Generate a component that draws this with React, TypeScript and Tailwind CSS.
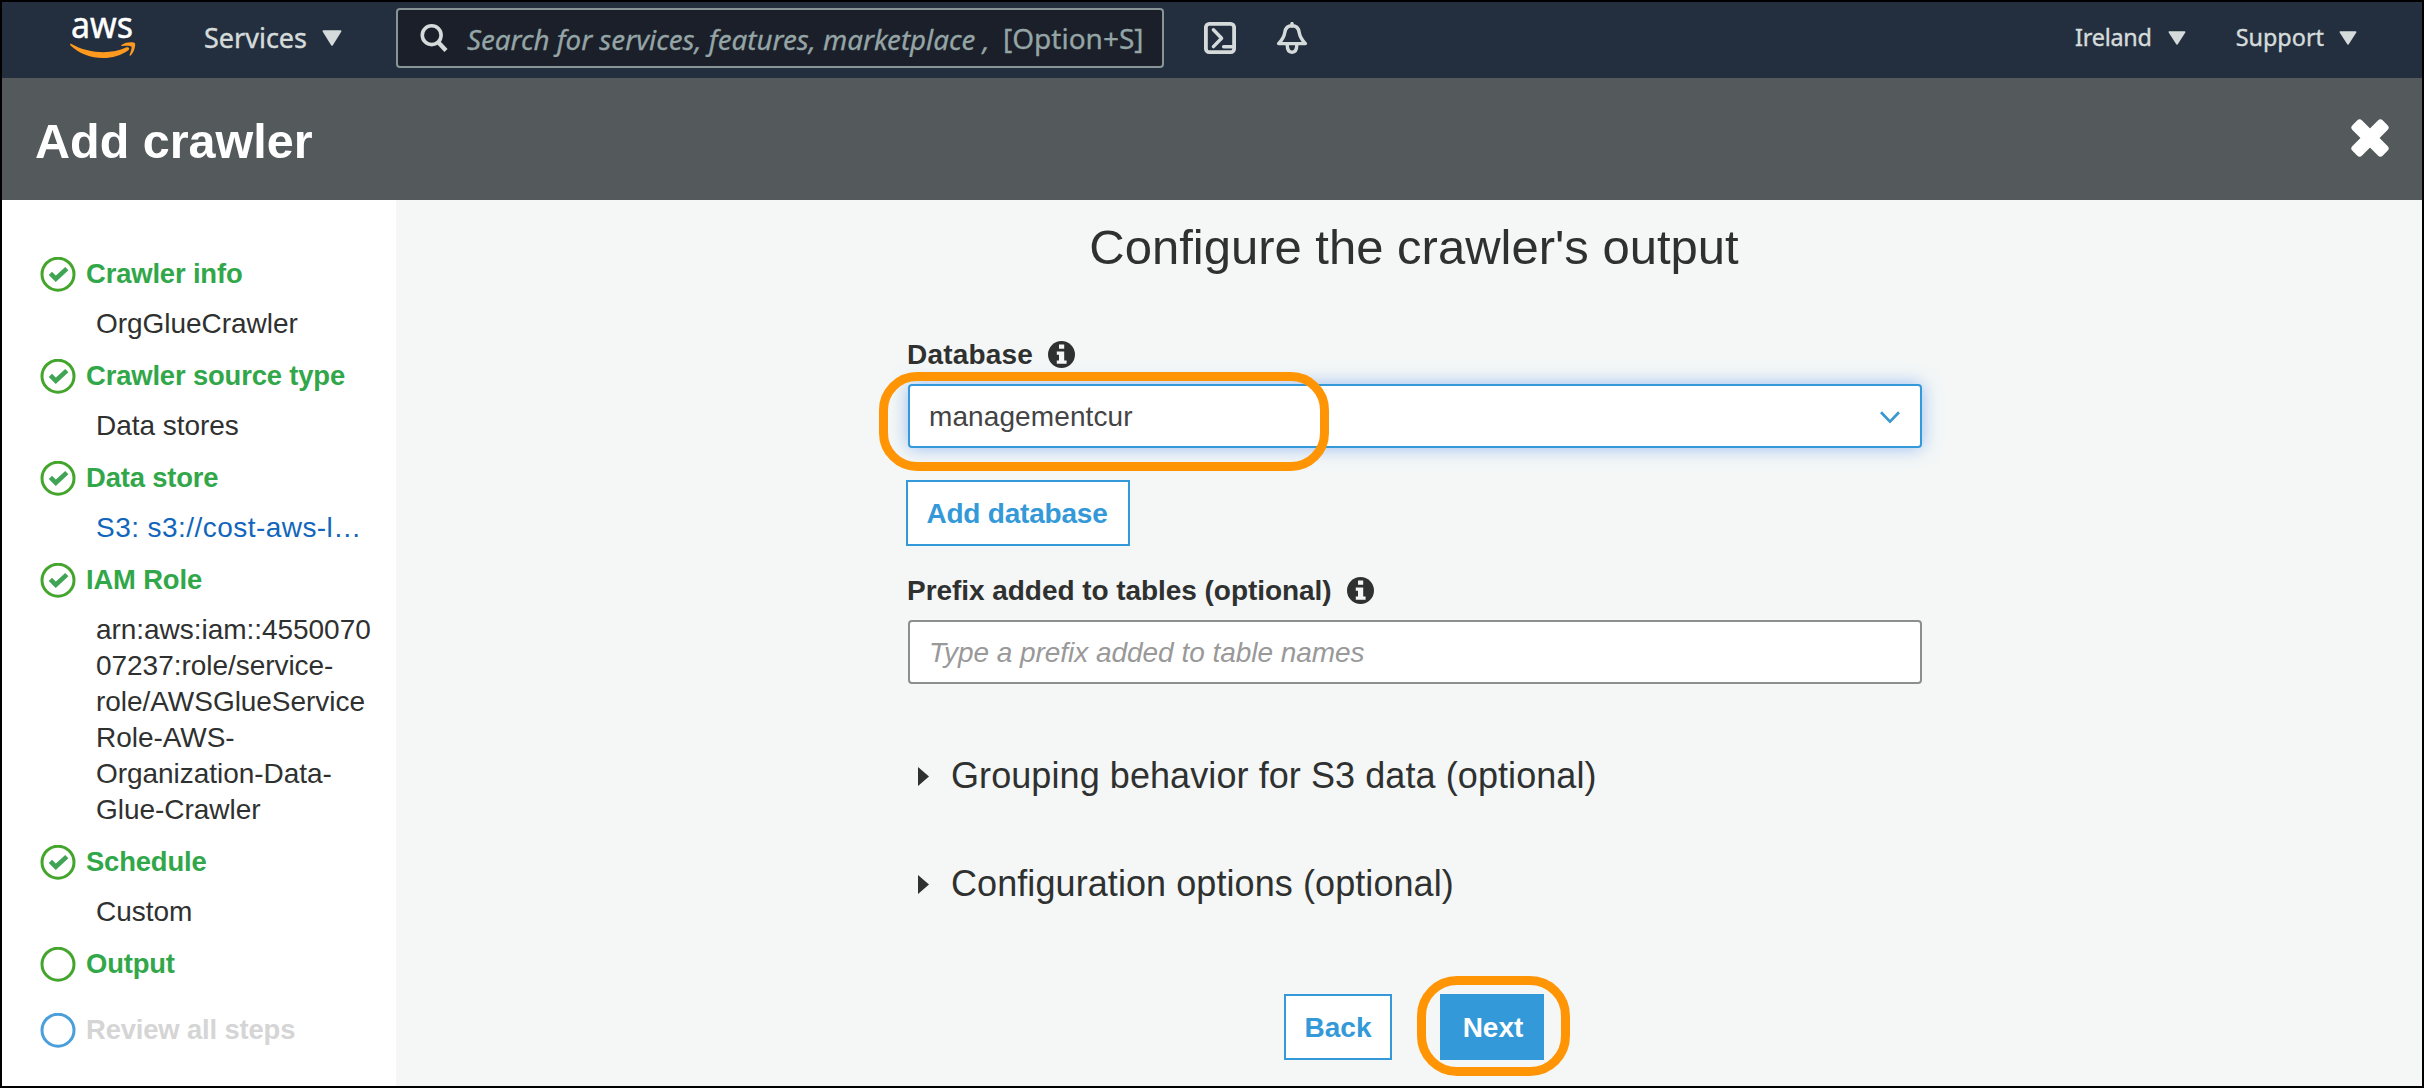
import React from "react";

type Step = {
  title: string;
  detail?: string[];
  state: "done" | "current" | "pending";
  link?: boolean;
};

const steps: Step[] = [
  { title: "Crawler info", detail: ["OrgGlueCrawler"], state: "done" },
  { title: "Crawler source type", detail: ["Data stores"], state: "done" },
  { title: "Data store", detail: ["S3: s3://cost-aws-l…"], state: "done", link: true },
  {
    title: "IAM Role",
    detail: [
      "arn:aws:iam::4550070",
      "07237:role/service-",
      "role/AWSGlueService",
      "Role-AWS-",
      "Organization-Data-",
      "Glue-Crawler",
    ],
    state: "done",
  },
  { title: "Schedule", detail: ["Custom"], state: "done" },
  { title: "Output", state: "current" },
  { title: "Review all steps", state: "pending" },
];

function Caret({ className }: { className: string }) {
  return (
    <svg viewBox="0 0 20 16" preserveAspectRatio="none" className={className}>
      <path d="M1.6 1.2H18.4L10 14.6Z" fill="#d5dbdb" stroke="#d5dbdb" strokeWidth="2" strokeLinejoin="round" />
    </svg>
  );
}

function AwsLogo() {
  return (
    <svg viewBox="0 -13 68 57" className="h-[57px] w-[68px] overflow-visible">
      <text
        x="2"
        y="23"
        fontSize="37"
        textLength="62"
        lengthAdjust="spacingAndGlyphs"
        fill="#fff"
        stroke="#fff"
        strokeWidth="0.5"
        fontFamily="Noto Sans, sans-serif"
      >
        aws
      </text>
      <path d="M1.5 28.5C20 39 42 39.6 57 32.6C59.4 31.6 61.4 33.6 59.4 35.2C44 46.6 17 46 1 30Z" fill="#ff9a1e" />
      <path
        d="M52.5 30C57 26.8 65 26.8 66 28.4C66.8 30.3 65 37.5 61.6 40.4C60.8 41 60.2 40.6 60.6 39.8C62 36.6 63 32.6 62.4 31.6C61.6 30.5 57 30.6 53.2 31.1C52.2 31.2 51.8 30.6 52.5 30Z"
        fill="#ff9a1e"
      />
    </svg>
  );
}

function StepIcon({ state }: { state: Step["state"] }) {
  return (
    <svg viewBox="0 0 36 36" className="mt-0.5 size-9 shrink-0" fill="none">
      <circle cx="18" cy="17.2" r="16" stroke={state === "pending" ? "#4a9fdb" : "#43a52c"} strokeWidth="3" />
      {state === "done" && <path d="M10.4 16.4L15.8 21.8L26.8 11.6" stroke="#40a455" strokeWidth="4.6" />}
    </svg>
  );
}

function InfoIcon() {
  return (
    <svg viewBox="0 0 27 27" className="size-[27px]">
      <circle cx="13.5" cy="13.5" r="13.5" fill="#2f3130" />
      <path d="M11 3.4H16.2V7.8H11ZM8.8 10.6H16.2V19.6H18.6V22.8H8.8V19.6H11V13.8H8.8Z" fill="#f4f7f6" />
    </svg>
  );
}

function Expander({ label }: { label: string }) {
  return (
    <div className="flex h-10 items-center pl-[10px]">
      <svg viewBox="0 0 11 19" className="mr-[22px] h-[19px] w-[11px]">
        <path d="M0 0L11 9.5L0 19Z" fill="#2f3130" />
      </svg>
      <span className="text-[36px] leading-10 tracking-[0.08px]">{label}</span>
    </div>
  );
}

export default function App() {
  return (
    <div className="flex h-[1088px] w-[2424px] flex-col overflow-hidden border-2 border-black bg-[#f4f7f6] font-['Liberation_Sans',Arial,sans-serif] whitespace-nowrap text-[#2f3130]">
      <nav className="flex h-[76px] shrink-0 items-start bg-[#232f3e] font-['Noto_Sans',sans-serif] text-[#d5dbdb]">
        <div className="ml-[67px]">
          <AwsLogo />
        </div>
        <div className="mt-[18px] ml-[67px] flex h-9 w-[192px] items-center">
          <span className="text-[27px] leading-9 [-webkit-text-stroke:0.4px]">Services</span>
          <Caret className="ml-[15px] h-4 w-5" />
        </div>
        <div className="mt-1.5 flex h-[60px] w-[768px] items-center rounded-[4px] border-2 border-[#879596] bg-[#1a1f29]">
          <svg viewBox="0 0 28 28" className="ml-[22px] size-7 shrink-0" fill="none" stroke="#d5dbdb" strokeWidth="3.6">
            <circle cx="11.7" cy="11.2" r="9.4" />
            <path d="M18 18L26 26.4" strokeWidth="4.4" />
          </svg>
          <span className="mt-0.5 ml-[19px] w-[521px] shrink-0 overflow-hidden text-[27.7px] leading-9 text-[#95a5a6] italic [-webkit-text-stroke:0.3px]">
            Search for services, features, marketplace ,
          </span>
          <span className="ml-[15px] text-[28px] leading-9 text-[#95a5a6] [-webkit-text-stroke:0.3px]">[Option+S]</span>
        </div>
        <svg viewBox="0 0 32 32" className="mt-5 ml-10 size-8 shrink-0" fill="none" stroke="#d5dbdb" strokeWidth="3.8">
          <rect x="1.9" y="1.9" width="28.2" height="28.2" rx="3.4" />
          <path d="M9.4 7.8L17.6 16.2L9.4 24.6" strokeLinecap="round" strokeLinejoin="round" strokeWidth="3.4" />
          <path d="M19.6 24.8H28" strokeLinecap="round" strokeWidth="3.4" />
        </svg>
        <svg viewBox="0 0 32 32" className="mt-5 ml-10 size-8 shrink-0" fill="none" stroke="#d5dbdb" strokeWidth="3.4" strokeLinejoin="round">
          <path d="M2.6 21.6C6.5 17.5 8.2 14.5 8.8 10.5C9.4 6 12 3.8 16 3.8C20 3.8 22.6 6 23.2 10.5C23.8 14.5 25.5 17.5 29.4 21.6Z" />
          <path d="M16 4V1.6" strokeLinecap="round" />
          <path d="M11.2 22.5C11.2 27.5 12.7 30.2 16 30.2C19.3 30.2 20.8 27.5 20.8 22.5" />
        </svg>
        <div className="mt-[18px] mr-[65px] ml-auto flex h-9 items-center text-[23.4px] leading-9 [-webkit-text-stroke:0.4px]">
          <span className="-mt-0.5 tracking-[-0.25px]">Ireland</span>
          <Caret className="ml-4 h-[14px] w-[18px]" />
          <span className="-mt-0.5 ml-[50px]">Support</span>
          <Caret className="ml-[15px] h-[14px] w-[18px]" />
        </div>
      </nav>

      <header className="flex h-[122px] shrink-0 items-center justify-between bg-[#54595c] pr-[33px] pl-[33px] text-white">
        <h1 className="mt-1 text-[48.5px] leading-[60px] font-bold">Add crawler</h1>
        <svg viewBox="0 0 38 38" className="mb-0.5 size-[38px]" fill="#fff">
          <rect x="-2.5" y="12.2" width="43" height="13.6" rx="3.5" transform="rotate(45 19 19)" />
          <rect x="-2.5" y="12.2" width="43" height="13.6" rx="3.5" transform="rotate(-45 19 19)" />
        </svg>
      </header>

      <div className="flex min-h-0 flex-1">
        <aside className="w-[394px] shrink-0 bg-white pt-14 pl-[38px] text-[28px] leading-9">
          {steps.map((step) => (
            <section key={step.title} className={step.detail ? "mb-4" : "mb-[30px]"}>
              <div className="flex h-9 items-center gap-[10px]">
                <StepIcon state={step.state} />
                <h2
                  className={
                    step.state === "pending"
                      ? "text-[27.4px] font-bold tracking-[-0.15px] text-[#d5d5d5]"
                      : "text-[27.4px] font-bold tracking-[-0.15px] text-[#31a749]"
                  }
                >
                  {step.title}
                </h2>
              </div>
              {step.detail && (
                <div className={step.link ? "mt-3.5 pl-14 tracking-[0.45px] text-[#1166bb]" : "mt-3.5 pl-14 tracking-[-0.04px]"}>
                  {step.detail.map((line) => (
                    <p key={line}>{line}</p>
                  ))}
                </div>
              )}
            </section>
          ))}
        </aside>

        <main className="ml-[512px] flex w-[1014px] flex-col pt-[17px]">
          <h2 className="-ml-0.5 text-center text-[49px] leading-[60px]">Configure the crawler's output</h2>

          <div className="mt-[59px] -ml-px flex h-9 items-center gap-[15px]">
            <span className="mt-px text-[28px] leading-9 font-bold tracking-[0.2px]">Database</span>
            <InfoIcon />
          </div>
          <div className="relative mt-3 flex h-16 items-center justify-between rounded-[4px] border-2 border-[#3399d8] bg-white pr-5 pl-[19px] shadow-[0_0_18px_rgba(80,140,240,0.55)]">
            <span className="mt-px text-[28px] leading-9 tracking-[0.1px] text-[#444]">managementcur</span>
            <svg viewBox="0 0 20 13" className="mt-0.5 h-[13px] w-5" fill="none" stroke="#3a97d0" strokeWidth="2.8">
              <path d="M1 1.2L10 10.6L19 1.2" />
            </svg>
            <div className="absolute -top-3.5 -left-[31px] h-[99px] w-[450px] rounded-[38px] border-[9px] border-[#ff9505]" />
          </div>
          <button className="mt-8 -ml-0.5 h-[66px] w-56 border-2 border-[#3399d8] bg-white pt-0.5 pr-0.5 text-[28px] leading-9 font-bold tracking-[-0.2px] text-[#3399d8]">
            Add database
          </button>

          <div className="mt-[26px] -ml-px flex h-9 items-center gap-[15px]">
            <span className="mt-px text-[28px] leading-9 font-bold tracking-[-0.05px]">Prefix added to tables (optional)</span>
            <InfoIcon />
          </div>
          <div className="mt-3 flex h-16 items-center rounded-[4px] border-2 border-[#8c8f8f] bg-white pl-[19px]">
            <span className="mt-px text-[28px] leading-9 tracking-[-0.04px] text-[#999] italic">Type a prefix added to table names</span>
          </div>

          <div className="mt-18 flex flex-col gap-[68px]">
            <Expander label="Grouping behavior for S3 data (optional)" />
            <Expander label="Configuration options (optional)" />
          </div>

          <div className="mt-[90px] -ml-0.5 flex justify-center gap-12">
            <button className="h-[66px] w-[108px] border-2 border-[#3399d8] bg-white pt-0.5 text-[28px] leading-9 font-bold text-[#3399d8]">
              Back
            </button>
            <div className="relative">
              <button className="h-[66px] w-[104px] bg-[#3399d8] pt-0.5 pl-0.5 text-[28px] leading-9 font-bold text-white">Next</button>
              <div className="absolute -top-[18px] -left-[23px] h-[100px] w-[153px] rounded-[40px] border-[9px] border-[#ff9505]" />
            </div>
          </div>
        </main>
      </div>
    </div>
  );
}
